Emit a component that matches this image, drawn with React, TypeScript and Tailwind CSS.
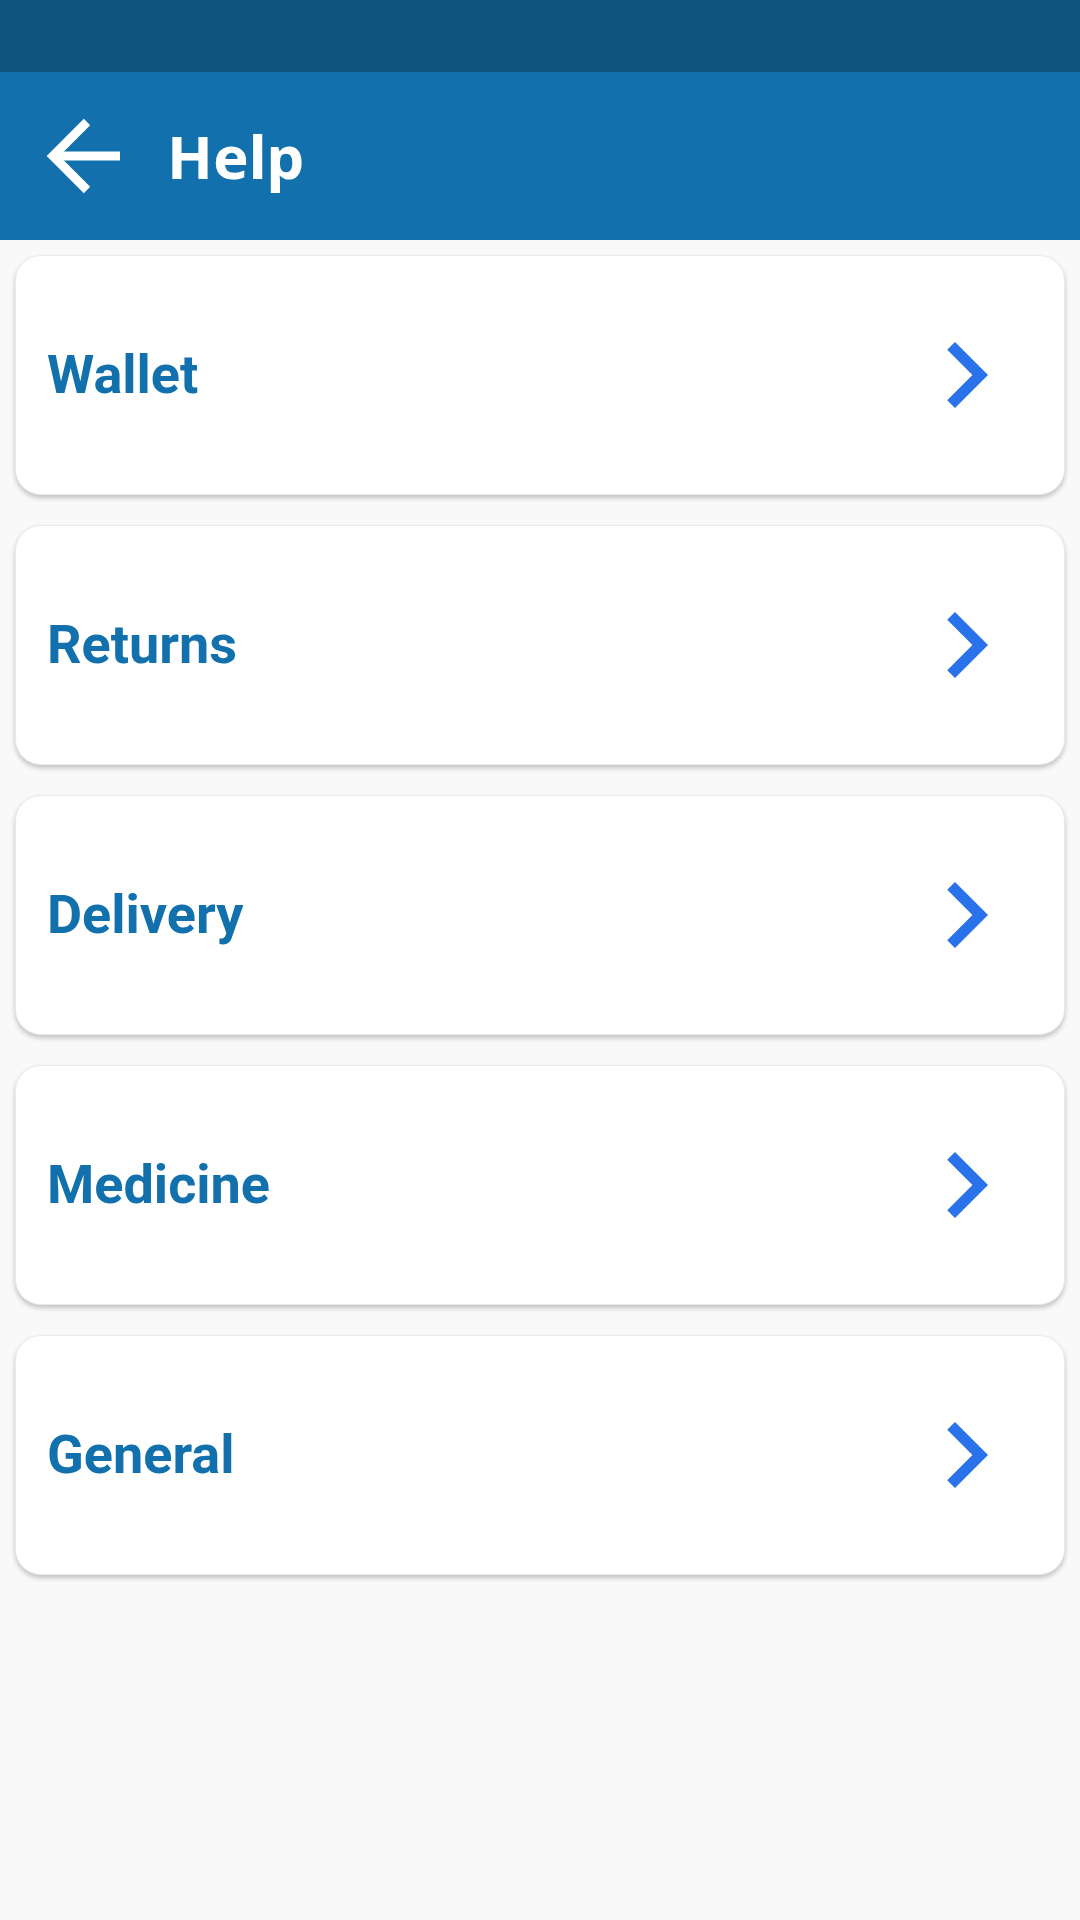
const topics = ['Wallet', 'Returns', 'Delivery', 'Medicine', 'General'];

function ChevronRight() {
  return (
    <svg viewBox="0 0 24 24" className="w-[132px] h-[132px]" fill="#2a72ea">
      <path d="M10 6L8.59 7.41 13.17 12l-4.58 4.59L10 18l6-6z" />
    </svg>
  );
}

export default function App() {
  return (
    <div className="w-[1080px] h-[1920px] bg-[#f9f9f9] font-['Roboto',sans-serif]">
      {/* Status bar */}
      <div className="h-[72px] bg-[#0d547e]" />

      {/* App bar */}
      <div className="h-[168px] bg-[#1271ad] flex items-center pl-[46px]">
        <svg viewBox="0 0 76 76" className="w-[76px] h-[76px]" fill="none" stroke="white" strokeWidth="9">
          <path d="M74 38H6" />
          <path d="M41 4L7 38L41 72" strokeLinejoin="miter" />
        </svg>
        <h1 className="ml-[45px] text-[60px] font-bold text-white leading-none font-['Noto_Sans',sans-serif]">Help</h1>
      </div>

      {/* Topics */}
      <div className="px-[15px] pt-[15px] flex flex-col gap-[30px]">
        {topics.map((t) => (
          <div
            key={t}
            className="h-[240px] bg-white rounded-[26px] border border-[#ebebeb] shadow-[0_3px_5px_rgba(0,0,0,0.22)] flex items-center justify-between pl-[31px] pr-[32px]"
          >
            <span className="text-[54px] font-bold text-[#1271ad] leading-none">{t}</span>
            <ChevronRight />
          </div>
        ))}
      </div>
    </div>
  );
}
